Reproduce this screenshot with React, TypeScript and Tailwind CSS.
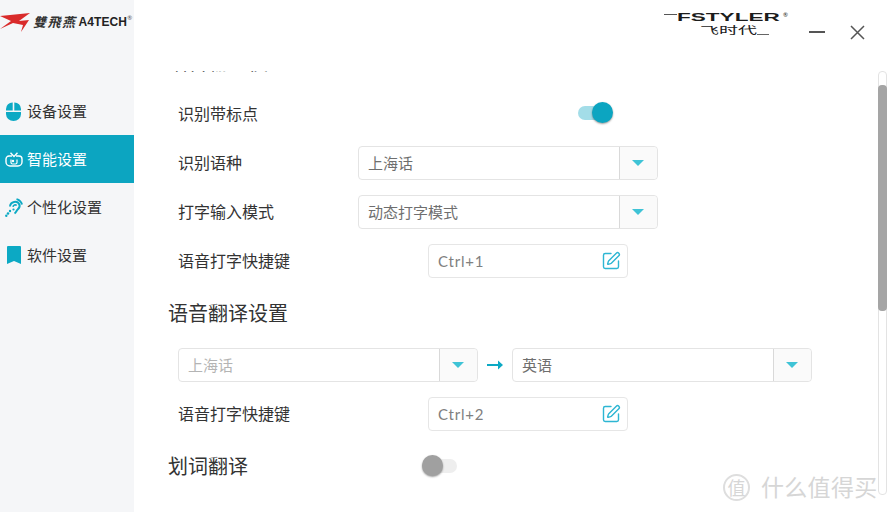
import { SquarePen } from "lucide-react";

const cjk = "font-['Lato','Noto_Sans_CJK_SC',sans-serif]";

function Caret() {
    return (
        <svg width="12" height="8" viewBox="0 0 12 8">
            <polygon points="0,1 12,1 6,7" fill="#3fc3d6" />
        </svg>
    );
}

function Select({ value, muted }: { value: string; muted?: boolean }) {
    return (
        <div className="flex h-[34px] w-[300px] rounded border border-[#e4e4e4] bg-white">
            <div className={`flex-1 pl-[9px] text-[15px] leading-[33px] ${muted ? "text-[#b4b4b4]" : "text-[#6e6e6e]"}`}>{value}</div>
            <div className="flex w-[38px] items-center justify-center rounded-r border-l border-[#d9d9d9] bg-[#fafafa] pr-[2px]">
                <Caret />
            </div>
        </div>
    );
}

function Hotkey({ value }: { value: string }) {
    return (
        <div className="flex h-[34px] w-[200px] items-center justify-between rounded border border-[#e6e6e6] pl-[9px] pr-[6px] text-[15px] tracking-[0.8px] text-[#808080]">
            <span>{value}</span>
            <SquarePen size={20} strokeWidth={1.7} color="#2db6d3" />
        </div>
    );
}

function Toggle({ on }: { on?: boolean }) {
    return (
        <div className="relative h-[14px] w-[35px]">
            <div className={`h-[14px] rounded-full ${on ? "w-[24px] bg-[#a3dde8]" : "w-[35px] bg-[#eeeeee]"}`} />
            <div className={`absolute top-[-4px] h-[21px] w-[21px] rounded-full shadow-[0_1px_2px_rgba(0,0,0,0.4)] ${on ? "left-[14px] bg-[#0ca5c1]" : "left-0 bg-[#a0a0a0]"}`} />
        </div>
    );
}

function MouseIcon() {
    return (
        <svg width="15" height="19" viewBox="0 0 15 19" fill="#0ca9c4">
            <path d="M0 8.500V7a6.500 6.500 0 0 1 6.700-6.500v8z" />
            <path d="M8.300 .5A6.500 6.500 0 0 1 15 7v1.500H8.300z" />
            <path d="M0 10h15v2a7.500 7 0 0 1-15 0z" />
        </svg>
    );
}

function RobotIcon() {
    return (
        <svg width="18" height="15" viewBox="0 0 18 15" fill="none" stroke="#fff" strokeWidth="1.400">
            <path d="M7 4H4a3 3 0 0 0-3 3v3a4 4 0 0 0 4 4h8a4 4 0 0 0 4-4V7a3 3 0 0 0-3-3h-3" />
            <path d="M5.500 .8 9 4.500 12.500 .8" />
            <path d="M6 7.500v3a1.500 1.500 0 0 0 1.500 1.500h3a1.500 1.500 0 0 0 1.500-1.500v-3" strokeWidth="1.200" />
            <circle cx="8" cy="9" r=".5" fill="#fff" />
        </svg>
    );
}

function EarIcon() {
    return (
        <svg width="18" height="19" viewBox="0 0 18 19" fill="none" stroke="#0ca9c4" strokeWidth="2">
            <path d="M5 8.500a5 5 0 0 1 9.500-1.800c.8 2.600-1 4-2.300 5.300-1 1-1 2.500-2.700 3.500" />
            <path d="M8 8.800a2.200 2.200 0 0 1 3.700-1.300" strokeWidth="1.600" />
            <path d="M11.500 1.100a7.500 7.500 0 0 1 5.500 5.500" />
            <circle cx="8.500" cy="11.500" r="1.100" fill="#0ca9c4" stroke="none" />
            <circle cx="5" cy="13" r="1.200" fill="#0ca9c4" stroke="none" />
            <circle cx="3" cy="15.500" r="1.300" fill="#0ca9c4" stroke="none" />
            <circle cx="1.300" cy="17.800" r="1.200" fill="#0ca9c4" stroke="none" />
        </svg>
    );
}

function BookmarkIcon() {
    return (
        <svg width="14" height="18" viewBox="0 0 14 18" fill="#0ca9c4">
            <path d="M1 0h12a1 1 0 0 1 1 1v17l-7-3-7 3V1a1 1 0 0 1 1-1z" />
        </svg>
    );
}

const menu = [
    { label: "设备设置", icon: <MouseIcon /> },
    { label: "智能设置", icon: <RobotIcon />, active: true },
    { label: "个性化设置", icon: <EarIcon /> },
    { label: "软件设置", icon: <BookmarkIcon /> },
];

function Sidebar() {
    return (
        <aside className="h-full w-[134px] shrink-0 bg-[#f5f6f8]">
            <div className="flex h-[87px] items-start pt-[12px]">
                <svg width="31" height="20" viewBox="0 0 31 20" className="shrink-0">
                    <polygon points="0,4 30,1 19,9 29,8 21,20 23,13 13,11 0,17 11,9" fill="#d92b2b" />
                </svg>
                <span className="mt-[2px] ml-[2px] text-[13px] leading-[16px] font-bold italic text-[#333] font-['Noto_Sans_CJK_TC',sans-serif] tracking-[1.500px]">雙飛燕</span>
                <span className="mt-[3px] ml-[2px] text-[12px] leading-[14px] font-bold text-[#222] font-['Liberation_Sans',sans-serif] tracking-[0.1px]">A4TECH</span>
                <span className="text-[6px] leading-[12px] text-[#555]">®</span>
            </div>
            {menu.map(m => (
                <div key={m.label} className={`flex h-[48px] items-center text-[15px] ${m.active ? "bg-[#0ca5c1] text-white" : "text-[#333]"}`}>
                    <span className="flex w-[27px] justify-center">{m.icon}</span>
                    <span>{m.label}</span>
                </div>
            ))}
        </aside>
    );
}

function Header() {
    return (
        <header className="flex h-[71px] shrink-0 items-start bg-white">
            <div className="ml-[530px] mt-[12px] w-[126px] text-[#1c1c1c]">
                <div className="flex items-start">
                    <span className="mt-[2px] h-px w-[13px] bg-[#555]" />
                    <span className="w-[106px] origin-left scale-x-[2.05] text-[11px] leading-[10px] font-bold font-['Liberation_Sans',sans-serif]">FSTYLER</span>
                    <span className="text-[6px] leading-[6px]">®</span>
                </div>
                <div className="mt-[3px] flex items-end pl-[36px]">
                    <span className="w-[57px] origin-left scale-x-[1.9] text-[10px] leading-[10px] font-['Noto_Sans_CJK_SC',sans-serif]">飞时代</span>
                    <span className="h-px w-[12px] bg-[#666]" />
                </div>
            </div>
            <svg width="16" height="2" viewBox="0 0 16 2" className="ml-[19px] mt-[31px]">
                <rect width="16" height="2" fill="#555" />
            </svg>
            <svg width="15" height="15" viewBox="0 0 15 15" className="ml-[25px] mt-[25px]" stroke="#555" strokeWidth="1.500">
                <path d="M1 1l13 13M14 1 1 14" />
            </svg>
        </header>
    );
}

function Scrollbar() {
    return (
        <div className="h-[424px] w-[9px] shrink-0 rounded-[4px] border border-[#e3e3e3]">
            <div className="mx-[-1px] mt-[13px] h-[226px] rounded-[4px] bg-[#a5a5a5]" />
        </div>
    );
}

function Settings() {
    return (
        <div className="h-[441px] w-[744px] shrink-0 overflow-hidden pl-[34px]">
            <h2 className="mt-[-23px] h-[28px] text-[20px] leading-[28px] text-[#333]">语音输入模</h2>
            <div className="mt-[20px] pl-[10px] text-[16px] text-[#333]">
                <div className="flex h-[34px] items-center">
                    <span className="w-[400px] pt-[2px]">识别带标点</span>
                    <Toggle on />
                </div>
                <div className="mt-[16px] flex items-center">
                    <span className="w-[180px]">识别语种</span>
                    <Select value="上海话" />
                </div>
                <div className="mt-[15px] flex items-center">
                    <span className="w-[180px]">打字输入模式</span>
                    <Select value="动态打字模式" />
                </div>
                <div className="mt-[15px] flex items-center">
                    <span className="w-[250px]">语音打字快捷键</span>
                    <Hotkey value="Ctrl+1" />
                </div>
            </div>
            <h2 className="mt-[22px] h-[28px] text-[20px] leading-[26px] text-[#333]">语音翻译设置</h2>
            <div className="mt-[20px] pl-[10px] text-[16px] text-[#333]">
                <div className="flex items-center">
                    <Select value="上海话" muted />
                    <span className="flex w-[34px] justify-center">
                        <svg width="16" height="10" viewBox="0 0 16 10" fill="#0ca9c4">
                            <rect y="4" width="12" height="2" />
                            <polygon points="11,0.500 16,5 11,9.500" />
                        </svg>
                    </span>
                    <Select value="英语" />
                </div>
                <div className="mt-[15px] flex items-center">
                    <span className="w-[250px]">语音打字快捷键</span>
                    <Hotkey value="Ctrl+2" />
                </div>
            </div>
            <div className="mt-[18px] flex h-[34px] items-center">
                <h2 className="w-[254px] text-[20px] text-[#333]">划词翻译</h2>
                <Toggle />
            </div>
        </div>
    );
}

function Watermark() {
    return (
        <div className="absolute left-[723px] top-[474px] flex items-center gap-[11px] text-[#d6d6d6]">
            <span className="flex h-[27px] w-[27px] items-center justify-center rounded-full border-2 border-[#dedede] text-[18px] leading-none">值</span>
            <span className="text-[23px] leading-[27px] tracking-[0.3px]">什么值得买</span>
        </div>
    );
}

export default function App() {
    return (
        <div className={`relative flex h-[512px] w-[889px] overflow-hidden bg-white ${cjk}`}>
            <Sidebar />
            <main className="flex flex-1 flex-col">
                <Header />
                <div className="flex items-start">
                    <Settings />
                    <Scrollbar />
                </div>
            </main>
            <Watermark />
        </div>
    );
}
